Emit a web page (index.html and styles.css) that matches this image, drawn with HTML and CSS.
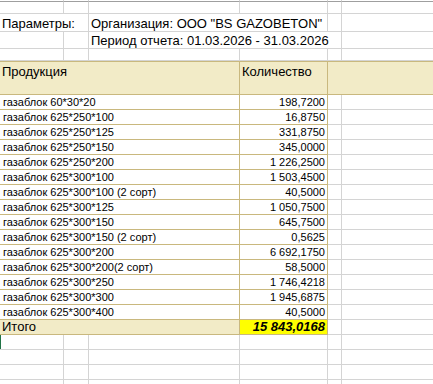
FILE: index.html
```html
<!DOCTYPE html>
<html lang="ru">
<head>
<meta charset="utf-8">
<title>Отчет</title>
<link rel="stylesheet" href="styles.css">
</head>
<body>
<div class="sheet">
  <div class="row h2 topline">
    <div class="cell"></div><div class="cell"></div><div class="cell"></div><div class="cell"></div><div class="cell"></div><div class="cell"></div>
  </div>
  <div class="row h12">
    <div class="cell"></div><div class="cell"></div><div class="cell"></div><div class="cell"></div><div class="cell"></div><div class="cell"></div>
  </div>
  <div class="row h18 big">
    <div class="cell span2 txt">Параметры:</div>
    <div class="cell span2 txt">Организация: ООО "BS GAZOBETON"</div>
    <div class="cell"></div><div class="cell"></div>
  </div>
  <div class="row h17 big">
    <div class="cell"></div><div class="cell"></div>
    <div class="cell span3 txt">Период отчета: 01.03.2026 - 31.03.2026</div>
    <div class="cell"></div>
  </div>
  <div class="row h12">
    <div class="cell"></div><div class="cell"></div><div class="cell"></div><div class="cell"></div><div class="cell"></div><div class="cell"></div>
  </div>
  <div class="row hdr big">
    <div class="hcell span3">Продукция</div>
    <div class="hcell">Количество</div>
    <div class="hcell span2 open"></div>
  </div>

  <div class="row h15 data">
    <div class="dcell span3 name">газаблок 60*30*20</div><div class="dcell num">198,7200</div><div class="cell"></div><div class="cell"></div>
  </div>
  <div class="row h15 data">
    <div class="dcell span3 name">газаблок 625*250*100</div><div class="dcell num">16,8750</div><div class="cell"></div><div class="cell"></div>
  </div>
  <div class="row h15 data">
    <div class="dcell span3 name">газаблок 625*250*125</div><div class="dcell num">331,8750</div><div class="cell"></div><div class="cell"></div>
  </div>
  <div class="row h15 data">
    <div class="dcell span3 name">газаблок 625*250*150</div><div class="dcell num">345,0000</div><div class="cell"></div><div class="cell"></div>
  </div>
  <div class="row h15 data">
    <div class="dcell span3 name">газаблок 625*250*200</div><div class="dcell num">1 226,2500</div><div class="cell"></div><div class="cell"></div>
  </div>
  <div class="row h15 data">
    <div class="dcell span3 name">газаблок 625*300*100</div><div class="dcell num">1 503,4500</div><div class="cell"></div><div class="cell"></div>
  </div>
  <div class="row h15 data">
    <div class="dcell span3 name">газаблок 625*300*100 (2 сорт)</div><div class="dcell num">40,5000</div><div class="cell"></div><div class="cell"></div>
  </div>
  <div class="row h15 data">
    <div class="dcell span3 name">газаблок 625*300*125</div><div class="dcell num">1 050,7500</div><div class="cell"></div><div class="cell"></div>
  </div>
  <div class="row h15 data">
    <div class="dcell span3 name">газаблок 625*300*150</div><div class="dcell num">645,7500</div><div class="cell"></div><div class="cell"></div>
  </div>
  <div class="row h15 data">
    <div class="dcell span3 name">газаблок 625*300*150 (2 сорт)</div><div class="dcell num">0,5625</div><div class="cell"></div><div class="cell"></div>
  </div>
  <div class="row h15 data">
    <div class="dcell span3 name">газаблок 625*300*200</div><div class="dcell num">6 692,1750</div><div class="cell"></div><div class="cell"></div>
  </div>
  <div class="row h15 data">
    <div class="dcell span3 name">газаблок 625*300*200(2 сорт)</div><div class="dcell num">58,5000</div><div class="cell"></div><div class="cell"></div>
  </div>
  <div class="row h15 data">
    <div class="dcell span3 name">газаблок 625*300*250</div><div class="dcell num">1 746,4218</div><div class="cell"></div><div class="cell"></div>
  </div>
  <div class="row h15 data">
    <div class="dcell span3 name">газаблок 625*300*300</div><div class="dcell num">1 945,6875</div><div class="cell"></div><div class="cell"></div>
  </div>
  <div class="row h15 data">
    <div class="dcell span3 name">газаблок 625*300*400</div><div class="dcell num">40,5000</div><div class="cell"></div><div class="cell"></div>
  </div>

  <div class="row h15 total">
    <div class="dcell span3 tlabel">Итого</div><div class="dcell tvalue">15 843,0168</div><div class="cell"></div><div class="cell"></div>
  </div>

  <div class="row h15">
    <div class="cell active"></div><div class="cell"></div><div class="cell"></div><div class="cell"></div><div class="cell"></div><div class="cell"></div>
  </div>
  <div class="row h15">
    <div class="cell"></div><div class="cell"></div><div class="cell"></div><div class="cell"></div><div class="cell"></div><div class="cell"></div>
  </div>
  <div class="row h15">
    <div class="cell"></div><div class="cell"></div><div class="cell"></div><div class="cell"></div><div class="cell"></div><div class="cell"></div>
  </div>
  <div class="row h15">
    <div class="cell"></div><div class="cell"></div><div class="cell"></div><div class="cell"></div><div class="cell"></div><div class="cell"></div>
  </div>
</div>
</body>
</html>
```

FILE: styles.css
```css
html, body {
  margin: 0;
  padding: 0;
  background: #ffffff;
  overflow: hidden;
}

.sheet {
  width: 433px;
  height: 384px;
  overflow: hidden;
  font-family: "Liberation Sans", Arial, sans-serif;
  color: #000000;
}

.row {
  display: grid;
  grid-template-columns: 64px 25px 151px 88px 14px 100px;
  box-sizing: border-box;
}

.h2 { height: 2px; }
.h12 { height: 12px; }
.h17 { height: 17px; }
.h18 { height: 18px; }
.h15 { height: 15px; }

.cell {
  box-sizing: border-box;
  border-right: 1px solid #d4d4d4;
  border-bottom: 1px solid #d4d4d4;
  white-space: nowrap;
  overflow: hidden;
}

.topline .cell {
  border-bottom-color: #9f9f9f;
}

.span2 { grid-column: span 2; }
.span3 { grid-column: span 3; }

.big {
  font-size: 13px;
}

.txt {
  display: flex;
  align-items: flex-end;
  padding-left: 2px;
  line-height: 15px;
}

.h17 .txt {
  line-height: 14px;
}

.hdr {
  height: 34px;
  background: #f2ebc7;
  border-top: 1px solid #c9b87e;
  border-bottom: 1px solid #c9b87e;
}

.hcell {
  box-sizing: border-box;
  border-right: 1px solid #c9b87e;
  padding: 2px 0 0 2px;
  line-height: 15px;
  white-space: nowrap;
  overflow: hidden;
}

.hcell.open {
  border-right: none;
}

.dcell {
  box-sizing: border-box;
  border-right: 1px solid #c9b87e;
  border-bottom: 1px solid #c9b87e;
  white-space: nowrap;
  overflow: hidden;
  display: flex;
  align-items: flex-end;
}

.data .dcell {
  font-size: 11px;
  line-height: 13px;
}

.name {
  padding-left: 3px;
}

.num {
  justify-content: flex-end;
  padding-right: 2px;
}

.total .dcell {
  font-size: 13px;
  line-height: 14px;
}

.tlabel {
  background: #f2ebc7;
  padding-left: 2px;
}

.tvalue {
  background: #ffff00;
  justify-content: flex-end;
  padding-right: 2px;
  font-weight: bold;
  font-style: italic;
}

.active {
  box-shadow: inset 1px 0 0 #217346;
}
```
